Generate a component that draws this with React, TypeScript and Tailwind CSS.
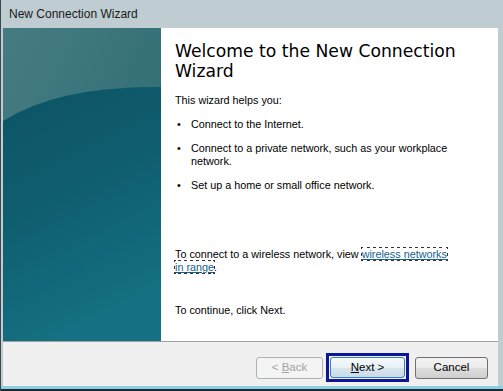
import React from 'react';

const bodyFont = "font-['Liberation_Sans',Arial,sans-serif]";

function SidePanel() {
  return (
    <svg width="158" height="313" viewBox="0 0 158 313" className="block">
      <defs>
        <linearGradient id="top" x1="0" y1="0" x2="1" y2="1">
          <stop offset="0" stopColor="#457c81" />
          <stop offset="1" stopColor="#2a6870" />
        </linearGradient>
        <linearGradient id="deep" x1="0" y1="0" x2="0.3" y2="1">
          <stop offset="0" stopColor="#0c5363" />
          <stop offset="0.5" stopColor="#0f5e70" />
          <stop offset="1" stopColor="#147082" />
        </linearGradient>
      </defs>
      <rect width="158" height="313" fill="url(#top)" />
      <path d="M0 93 Q 55 58 158 59 L158 313 L0 313 Z" fill="url(#deep)" />
    </svg>
  );
}

function Bullet({ children }: { children: React.ReactNode }) {
  return (
    <div className="flex">
      <span className="w-[16px] pl-[2px] shrink-0">•</span>
      <span>{children}</span>
    </div>
  );
}

export default function App() {
  return (
    <div className="w-[503px] h-[391px] bg-[#bfcdd3] flex flex-col border-l border-[#3a4a50] overflow-hidden">
      <div className="h-[28px] shrink-0 flex items-center pl-[8px] text-[12px] text-[#1a1a1a] font-['Liberation_Sans',Arial,sans-serif]">
        New Connection Wizard
      </div>

      <div className="flex flex-col flex-1 ml-[2px] mr-[5px]">
        <div className="flex h-[313px]">
          <div className="w-[158px] shrink-0 border-r border-[#d4d8da]">
            <SidePanel />
          </div>
          <div className={`flex-1 bg-white pl-[14px] pt-[13px] text-[10.8px] leading-[13px] text-black ${bodyFont}`}>
            <h1 className="font-['DejaVu_Sans',Verdana,sans-serif] text-[17.2px] leading-[20px] text-black">
              Welcome to the New Connection
              <br />
              Wizard
            </h1>
            <p className="mt-[13px]">This wizard helps you:</p>
            <div className="mt-[11px]">
              <Bullet>Connect to the Internet.</Bullet>
            </div>
            <div className="mt-[11px]">
              <Bullet>
                Connect to a private network, such as your workplace
                <br />
                network.
              </Bullet>
            </div>
            <div className="mt-[11px]">
              <Bullet>Set up a home or small office network.</Bullet>
            </div>
            <p className="mt-[56px]">
              To connect to a wireless network, view{' '}
              <span className="text-[#155f8f] underline outline-1 outline-dotted outline-[#333] [box-decoration-break:clone]">
                wireless networks
                <br />
                in range
              </span>
              .
            </p>
            <p className="mt-[30px]">To continue, click Next.</p>
          </div>
        </div>

        <div className={`h-[45px] bg-[#f0f0f0] border-t border-[#a0a0a0] flex items-center justify-end pr-[10px] pt-[7px] text-[11.5px] ${bodyFont}`}>
          <button className="w-[67px] h-[22px] rounded-[3px] border border-[#adb2b5] bg-[#f4f4f4] text-[#a3a3a3]">
            &lt; <span className="underline">B</span>ack
          </button>
          <div className="ml-[3px] border-[3px] border-[#0a1696] p-[1px]">
            <button className="w-[75px] h-[21px] rounded-[3px] border border-[#3c7fb1] bg-[linear-gradient(to_bottom,#f3f8fb_0%,#e9f1f6_50%,#d8e5ee_50%,#c9dbe7_100%)] text-black">
              <span className="underline">N</span>ext &gt;
            </button>
          </div>
          <button className="ml-[6px] w-[73px] h-[22px] rounded-[3px] border border-[#707070] bg-[linear-gradient(to_bottom,#f2f2f2_0%,#ebebeb_50%,#dddddd_50%,#cfcfcf_100%)] text-black">
            Cancel
          </button>
        </div>
      </div>

      <div className="h-[5px] shrink-0 bg-[#8ccfe4] border-b-2 border-[#1c2a30]" />
    </div>
  );
}
